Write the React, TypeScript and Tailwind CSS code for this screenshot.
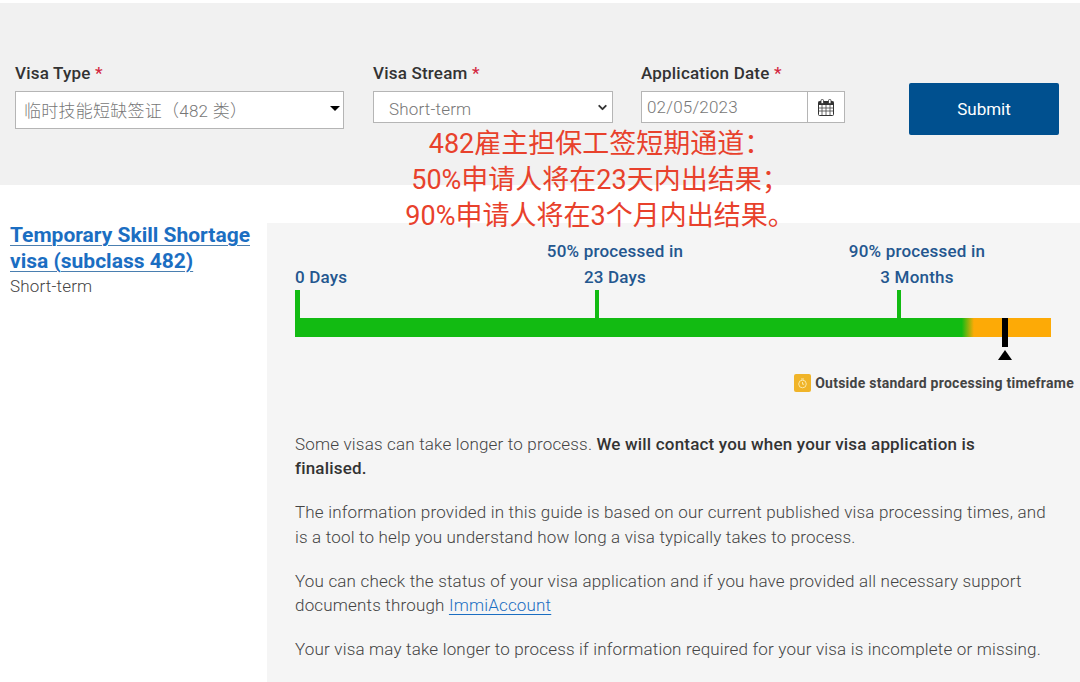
import React from 'react';
import { ChevronDown } from 'lucide-react';

const Required = () => <span className="text-[#d3273e]">*</span>;

const CalendarIcon = () => (
  <svg width="16" height="17" viewBox="0 0 16 17" fill="none">
    <rect x="0.5" y="2.5" width="15" height="14" rx="1" fill="#fff" stroke="#333" />
    <rect x="0.5" y="2.5" width="15" height="3.5" fill="#333" />
    <rect x="3" y="0.5" width="2.5" height="4" rx="1" fill="#fff" stroke="#333" strokeWidth="0.8" />
    <rect x="10.5" y="0.5" width="2.5" height="4" rx="1" fill="#fff" stroke="#333" strokeWidth="0.8" />
    <path d="M1 9h14M1 12h14M4 6v10M8 6v10M12 6v10" stroke="#444" strokeWidth="0.8" />
  </svg>
);

const TimerIcon = () => (
  <div className="w-[17px] h-[18px] bg-[#f0b429] rounded-[2px] flex items-center justify-center">
    <svg width="11" height="11" viewBox="0 0 11 11" fill="none" stroke="#fbe7a8" strokeWidth="1">
      <circle cx="5.5" cy="6" r="3.8" />
      <path d="M5.5 4v2.2h1.6M4 1h3" />
    </svg>
  </div>
);

const App = () => {
  return (
    <div className="relative w-[1080px] h-[682px] bg-white overflow-hidden font-['Roboto',sans-serif] text-[#333]">
      {/* Search form */}
      <div className="mt-[3px] h-[182px] bg-[#f1f1f1] flex pt-[59px] pl-[15px]">
        <div className="w-[329px]">
          <div className="text-[17px] leading-[22px] font-medium h-[29px] tracking-[0.2px]">
            Visa Type <Required />
          </div>
          <div className="h-[38px] bg-white border border-[#b5b5b5] flex items-center justify-between pl-[8px] pr-[3px] text-[#777] font-light">
            <span className="text-[17px] tracking-[0.25px] font-['Roboto','Noto_Sans_CJK_SC',sans-serif] mt-[4px]">临时技能短缺签证（482 类）</span>
            <span className="w-0 h-0 mb-[4px] border-x-[5px] border-x-transparent border-t-[5px] border-t-black" />
          </div>
        </div>
        <div className="ml-[29px] w-[240px]">
          <div className="text-[17px] leading-[22px] font-medium h-[29px] tracking-[0.2px]">
            Visa Stream <Required />
          </div>
          <div className="h-[32px] bg-white border border-[#b5b5b5] flex items-center justify-between pl-[15px] pr-[3px] text-[#777] font-light">
            <span className="text-[17px] mt-[5px] tracking-[0.18px]">Short-term</span>
            <ChevronDown size={13} strokeWidth={3.5} color="#333" />
          </div>
        </div>
        <div className="ml-[28px] w-[204px]">
          <div className="text-[17px] leading-[22px] font-medium h-[29px] tracking-[0.2px]">
            Application Date <Required />
          </div>
          <div className="h-[32px] bg-white border border-[#b5b5b5] flex items-center text-[#777] font-light">
            <span className="flex-1 pl-[5px] pt-[2px] text-[17px] tracking-[0.18px]">02/05/2023</span>
            <span className="w-[37px] h-full border-l border-[#b5b5b5] flex items-center justify-center">
              <CalendarIcon />
            </span>
          </div>
        </div>
        <button className="ml-[64px] mt-[21px] pt-[2px] w-[150px] h-[52px] bg-[#00508f] rounded-[2px] text-white text-[17px]">
          Submit
        </button>
      </div>

      {/* Result */}
      <div className="flex">
        <div className="w-[267px] pl-[10px] pt-[37px]">
          <div className="text-[21px] leading-[26px] font-bold text-[#1b6ec2]">
            <span className="underline decoration-1 decoration-[#4a7fb0] underline-offset-[3px]">Temporary Skill Shortage</span>
            <br />
            <span className="underline decoration-1 decoration-[#4a7fb0] underline-offset-[3px]">visa (subclass 482)</span>
          </div>
          <div className="text-[17px] leading-[24px] font-light tracking-[0.18px] text-[#444]">Short-term</div>
        </div>
        <div className="mt-[38px] w-[813px] h-[459px] bg-[#f5f5f5] pl-[28px] pt-[15px]">
          {/* Timeline labels */}
          <div className="flex text-[17px] leading-[26px] font-medium text-[#24578f] h-[52px] tracking-[0.2px]">
            <div className="w-[250px] pt-[26px]">0 Days</div>
            <div className="w-[140px] text-center">
              50% processed in
              <br />
              23 Days
            </div>
            <div className="w-[162px]" />
            <div className="w-[140px] text-center">
              90% processed in
              <br />
              3 Months
            </div>
          </div>

          {/* Timeline ticks */}
          <div className="flex h-[28px]">
            <span className="w-[5px] h-full bg-[#12bb12]" />
            <span className="w-[4px] h-full bg-[#12bb12] ml-[295px]" />
            <span className="w-[4px] h-full bg-[#12bb12] ml-[298px]" />
          </div>
          <div className="relative w-[756px] h-[19px] bg-[linear-gradient(to_right,#12bb12_0%,#12bb12_88.2%,#fdaa06_89.8%,#fdaa06_100%)]">
            <span className="absolute left-[707px] top-0 w-[6px] h-[29px] bg-black" />
            <span className="absolute left-[703px] top-[32px] w-0 h-0 border-x-[7px] border-x-transparent border-b-[10px] border-b-black" />
          </div>

          {/* Legend */}
          <div className="flex justify-end items-center gap-[4px] mt-[37px] pr-[6px] text-[14px] leading-[18px] font-bold text-[#444] tracking-[0.26px]">
            <TimerIcon />
            <span>Outside standard processing timeframe</span>
          </div>

          {/* Notes */}
          <div className="mt-[39.5px] w-[753px] text-[17px] leading-[24.5px] font-light tracking-[0.18px] text-[#444]">
            <p>
              Some visas can take longer to process.{' '}
              <span className="font-medium text-[#333]">We will contact you when your visa application is finalised.</span>
            </p>
            <p className="mt-[19.5px]">
              The information provided in this guide is based on our current published visa processing times, and is a tool to help you understand how long a visa typically takes to process.
            </p>
            <p className="mt-[19.5px]">
              You can check the status of your visa application and if you have provided all necessary support documents through{' '}
              <span className="text-[#1b6ec2] underline decoration-1 underline-offset-[3px]">ImmiAccount</span>
            </p>
            <p className="mt-[19.5px]">
              Your visa may take longer to process if information required for your visa is incomplete or missing.
            </p>
          </div>
        </div>
      </div>

      {/* Red annotation laid over the form and result */}
      <div className="absolute left-[400px] top-[126px] w-[400px] text-center text-[27px] leading-[36px] text-[#e8412c] font-['Roboto','Noto_Sans_CJK_SC',sans-serif] whitespace-nowrap">
        <p>482雇主担保工签短期通道：</p>
        <p>50%申请人将在23天内出结果；</p>
        <p>90%申请人将在3个月内出结果。</p>
      </div>
    </div>
  );
};

export default App;
